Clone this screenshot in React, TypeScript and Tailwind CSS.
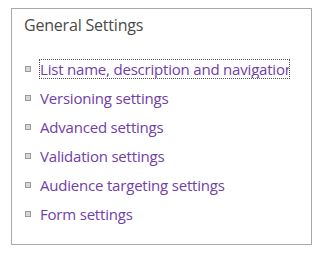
import React from "react";

const items = [
  "List name, description and navigation",
  "Versioning settings",
  "Advanced settings",
  "Validation settings",
  "Audience targeting settings",
  "Form settings",
];

export default function App() {
  return (
    <div className="w-[322px] h-[256px] bg-white pt-[8px] pl-[11px]" style={{ fontFamily: '"Open Sans", "Noto Sans", sans-serif' }}>
      <div className="w-[301px] h-[237px] border border-[#a8a8a8] pl-[12px] pt-[5px]">
        <div className="text-[16px] leading-[22px] text-[#4a4a4a] tracking-[-0.2px]">General Settings</div>
        <ul className="mt-[18px] flex flex-col">
          {items.map((t, i) => (
            <li key={t} className="h-[29px] flex items-center">
              <span className="shrink-0 w-[6px] h-[6px] border border-[#9a9a9a] bg-[#d8d8d8] mr-[8px] ml-[1px]" />
              {i === 0 ? (
                <span className="block w-[251px] overflow-hidden whitespace-nowrap border border-dotted border-[#555] leading-[18px] text-[15px] text-[#7040a8] tracking-[-0.2px]">
                  {t}
                </span>
              ) : (
                <span className="whitespace-nowrap text-[15px] leading-[18px] text-[#7040a8] tracking-[-0.2px] border border-transparent">{t}</span>
              )}
            </li>
          ))}
        </ul>
      </div>
    </div>
  );
}
